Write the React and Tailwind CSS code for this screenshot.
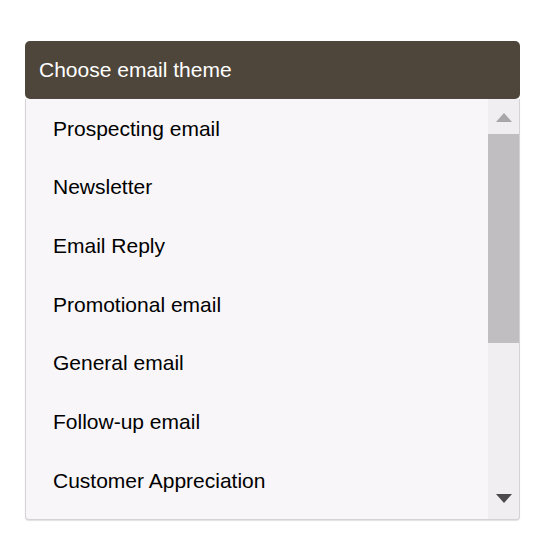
import React from "react";

const themes = [
  "Prospecting email",
  "Newsletter",
  "Email Reply",
  "Promotional email",
  "General email",
  "Follow-up email",
  "Customer Appreciation",
];

export default function App() {
  return (
    <div className="w-[560px] h-[546px] bg-white pt-[41px] pl-[25px]" style={{ fontFamily: '"Liberation Sans", Arial, sans-serif' }}>
      <div className="w-[495px]">
        {/* Header */}
        <div className="h-[58px] bg-[#4e463a] rounded-[5px] flex items-center pl-[14px] text-white text-[21px]">
          Choose email theme
        </div>
        {/* Dropdown list */}
        <div className="h-[421px] flex bg-[#f8f6f8] border-l border-r border-b border-[#d4d2d4] rounded-b-[4px] overflow-hidden shadow-[0_1px_1px_rgba(0,0,0,0.12)]">
          <div className="flex-1 overflow-hidden">
            {themes.map((t) => (
              <div key={t} className="h-[58.67px] flex items-center pl-[27px] text-[21px] text-black">
                {t}
              </div>
            ))}
          </div>
          {/* Scrollbar */}
          <div className="w-[31px] bg-[#f0eef0] flex flex-col items-center">
            <div className="h-[35px] w-full flex items-center justify-center pt-[2px]">
              <svg width="16" height="9" viewBox="0 0 16 9">
                <polygon points="8,0 16,9 0,9" fill="#a9a6a9" />
              </svg>
            </div>
            <div className="h-[209px] w-full bg-[#c1bec1]" />
            <div className="flex-1" />
            <div className="h-[37px] w-full flex items-center justify-center pb-[4px]">
              <svg width="16" height="9" viewBox="0 0 16 9">
                <polygon points="0,0 16,0 8,9" fill="#4a4a4a" />
              </svg>
            </div>
          </div>
        </div>
      </div>
    </div>
  );
}
